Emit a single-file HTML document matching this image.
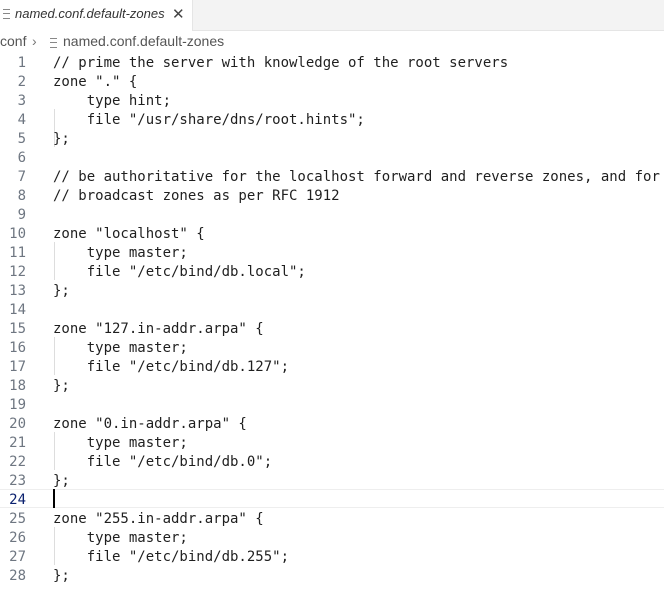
<!DOCTYPE html>
<html><head><style>
body{margin:0;width:664px;height:595px;background:#fff;overflow:hidden;position:relative;font-family:"DejaVu Sans Mono","Liberation Mono",monospace;}
.tabbar{position:absolute;left:0;top:0;width:664px;height:30px;background:#f3f3f3;border-bottom:1px solid #e5e5e5;}
.tab{position:absolute;left:0;top:0;width:192px;height:31px;background:#fff;border-right:1px solid #e5e5e5;font-family:"Liberation Sans",sans-serif;font-style:italic;font-size:13px;color:#333;}
.tab .t{position:absolute;left:15px;top:6px;}
.tab .x{position:absolute;left:172px;top:5px;font-style:normal;font-size:15px;color:#444;}
.ico{position:absolute;width:7px;height:8px;border-top:1px solid #888;border-bottom:1px solid #888;}
.ico:after{content:"";position:absolute;left:0;right:0;top:3px;border-top:1px solid #888;}
.cr{position:absolute;top:33px;font-family:"Liberation Sans",sans-serif;font-size:14px;color:#555;white-space:pre;}
.ln{position:absolute;left:0;width:26px;text-align:right;font-size:14px;color:#6e7681;line-height:19px;}
.code{position:absolute;left:53px;font-size:14px;color:#1f1f1f;line-height:19px;white-space:pre;}
.cur{position:absolute;left:0;top:489px;width:664px;height:17px;border-top:1px solid #eee;border-bottom:1px solid #eee;}
.guide{position:absolute;left:54px;width:1px;background:#ddd;}
</style></head><body>
<div class="tabbar"></div>
<div class="tab"><div class="ico" style="left:3px;top:9px"></div><span class="t">named.conf.default-zones</span><span class="x">✕</span></div>
<div class="cr" style="left:0">conf</div>
<div class="cr" style="left:32px;color:#777">›</div>
<div class="ico" style="left:50px;top:38px"></div>
<div class="cr" style="left:63px">named.conf.default-zones</div>
<div class="cur"></div>
<div class="guide" style="top:109px;height:38px"></div>
<div class="guide" style="top:242px;height:38px"></div>
<div class="guide" style="top:337px;height:38px"></div>
<div class="guide" style="top:432px;height:38px"></div>
<div class="guide" style="top:527px;height:38px"></div>
<div class="ln" style="top:54px">1<br>2<br>3<br>4<br>5<br>6<br>7<br>8<br>9<br>10<br>11<br>12<br>13<br>14<br>15<br>16<br>17<br>18<br>19<br>20<br>21<br>22<br>23<br><span style="color:#0b216f">24</span><br>25<br>26<br>27<br>28</div>
<div class="code" style="top:54px">// prime the server with knowledge of the root servers
zone "." {
    type hint;
    file "/usr/share/dns/root.hints";
};

// be authoritative for the localhost forward and reverse zones, and for
// broadcast zones as per RFC 1912

zone "localhost" {
    type master;
    file "/etc/bind/db.local";
};

zone "127.in-addr.arpa" {
    type master;
    file "/etc/bind/db.127";
};

zone "0.in-addr.arpa" {
    type master;
    file "/etc/bind/db.0";
};

zone "255.in-addr.arpa" {
    type master;
    file "/etc/bind/db.255";
};</div>
<div style="position:absolute;left:53px;top:489px;width:2px;height:19px;background:#000"></div>
</body></html>
